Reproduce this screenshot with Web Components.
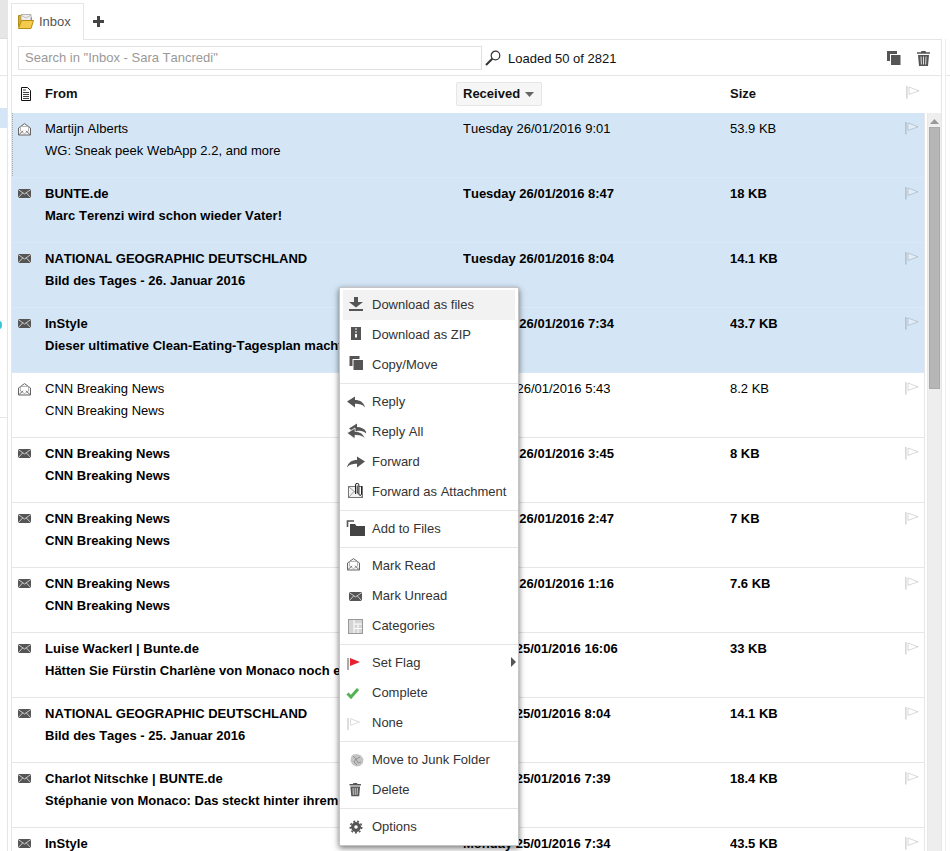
<!DOCTYPE html>
<html lang="en">
<head>
<meta charset="utf-8">
<title>Inbox</title>
<style>
html,body{margin:0;padding:0;height:851px;overflow:hidden;background:#fff;font:13px "Liberation Sans",Arial,sans-serif;font-kerning:none;color:#000}
</style>
</head>
<body>
<mail-app>
  <folder-strip slot="left"></folder-strip>
  <mail-tabs slot="tabs"><span>Inbox</span></mail-tabs>
  <mail-toolbar slot="toolbar">
    <span slot="placeholder">Search in "Inbox - Sara Tancredi"</span>
    <span slot="status">Loaded 50 of 2821</span>
  </mail-toolbar>
  <list-header slot="header"></list-header>
  <mail-list slot="list">
    <mail-row selected focused read><span slot="from">Martijn Alberts</span><span slot="subject">WG: Sneak peek WebApp 2.2, and more</span><span slot="date">Tuesday 26/01/2016 9:01</span><span slot="size">53.9 KB</span></mail-row>
    <mail-row selected><span slot="from">BUNTE.de</span><span slot="subject">Marc Terenzi wird schon wieder Vater!</span><span slot="date">Tuesday 26/01/2016 8:47</span><span slot="size">18 KB</span></mail-row>
    <mail-row selected><span slot="from">NATIONAL GEOGRAPHIC DEUTSCHLAND</span><span slot="subject">Bild des Tages - 26. Januar 2016</span><span slot="date">Tuesday 26/01/2016 8:04</span><span slot="size">14.1 KB</span></mail-row>
    <mail-row selected><span slot="from">InStyle</span><span slot="subject">Dieser ultimative Clean-Eating-Tagesplan macht</span><span slot="date">Tuesday 26/01/2016 7:34</span><span slot="size">43.7 KB</span></mail-row>
    <mail-row read><span slot="from">CNN Breaking News</span><span slot="subject">CNN Breaking News</span><span slot="date">Tuesday 26/01/2016 5:43</span><span slot="size">8.2 KB</span></mail-row>
    <mail-row><span slot="from">CNN Breaking News</span><span slot="subject">CNN Breaking News</span><span slot="date">Tuesday 26/01/2016 3:45</span><span slot="size">8 KB</span></mail-row>
    <mail-row><span slot="from">CNN Breaking News</span><span slot="subject">CNN Breaking News</span><span slot="date">Tuesday 26/01/2016 2:47</span><span slot="size">7 KB</span></mail-row>
    <mail-row><span slot="from">CNN Breaking News</span><span slot="subject">CNN Breaking News</span><span slot="date">Tuesday 26/01/2016 1:16</span><span slot="size">7.6 KB</span></mail-row>
    <mail-row><span slot="from">Luise Wackerl | Bunte.de</span><span slot="subject">Hätten Sie Fürstin Charlène von Monaco noch e</span><span slot="date">Monday 25/01/2016 16:06</span><span slot="size">33 KB</span></mail-row>
    <mail-row><span slot="from">NATIONAL GEOGRAPHIC DEUTSCHLAND</span><span slot="subject">Bild des Tages - 25. Januar 2016</span><span slot="date">Monday 25/01/2016 8:04</span><span slot="size">14.1 KB</span></mail-row>
    <mail-row><span slot="from">Charlot Nitschke | BUNTE.de</span><span slot="subject">Stéphanie von Monaco: Das steckt hinter ihrem</span><span slot="date">Monday 25/01/2016 7:39</span><span slot="size">18.4 KB</span></mail-row>
    <mail-row><span slot="from">InStyle</span><span slot="date">Monday 25/01/2016 7:34</span><span slot="size">43.5 KB</span></mail-row>
  </mail-list>
</mail-app>
<context-menu>
  <menu-item icon="download" hover>Download as files</menu-item>
  <menu-item icon="zip">Download as ZIP</menu-item>
  <menu-item icon="copy">Copy/Move</menu-item>
  <menu-sep></menu-sep>
  <menu-item icon="reply">Reply</menu-item>
  <menu-item icon="replyall">Reply All</menu-item>
  <menu-item icon="forward">Forward</menu-item>
  <menu-item icon="attach">Forward as Attachment</menu-item>
  <menu-sep></menu-sep>
  <menu-item icon="files">Add to Files</menu-item>
  <menu-sep></menu-sep>
  <menu-item icon="markread">Mark Read</menu-item>
  <menu-item icon="markunread">Mark Unread</menu-item>
  <menu-item icon="categories">Categories</menu-item>
  <menu-sep></menu-sep>
  <menu-item icon="setflag" submenu>Set Flag</menu-item>
  <menu-item icon="check">Complete</menu-item>
  <menu-item icon="noflag">None</menu-item>
  <menu-sep></menu-sep>
  <menu-item icon="junk">Move to Junk Folder</menu-item>
  <menu-item icon="trash">Delete</menu-item>
  <menu-sep></menu-sep>
  <menu-item icon="gear">Options</menu-item>
</context-menu>
<script>
const ENV_OPEN='<path d="M.5 5 6.500.6l6 4.400v7H.5z" fill="#f4f4f4" stroke="#666"/><path d="M2.500 3.500h8v4.500l-4 2.500-4-2.500z" fill="#fff" stroke="#999" stroke-width=".7"/><path d="M.8 11.700 5.200 7.800M12.200 11.700 7.800 7.800" stroke="#777" fill="none"/>';
const ENV_CLOSED='<rect x="0" y="1" width="13" height="9" fill="#555"/><path d="M0 1.400 6.500 6 13 1.400M0 10 4.700 4.900M13 10 8.300 4.900" stroke="#e8e8e8" stroke-width=".8" fill="none"/>';
const ARROW_L='M1 8.500 9 3.500v3.400c5 0 9 2.400 10 7.600-2.400-3-5.400-3.700-10-3.700v3.600z';
const ARROW_R='M19 8.500 11 3.500v3.400c-5 0-9 2.400-10 7.600 2.400-3 5.400-3.700 10-3.700v3.600z';
const TRASH='<path d="M4.500 0h4l.6 1.200H13v1.600H0V1.200h3.900z" fill="#555"/><path d="M1 4h11l-1 11H2z" fill="#555"/><path d="M4 5.500 4.400 13.500M6.500 5.500v8M9 5.500 8.600 13.500" stroke="#eee" stroke-width=".9"/>';
const COPY='<rect x="0" y="0" width="10" height="10" fill="#555"/><rect x="3.500" y="3.500" width="10.500" height="11" fill="#555" stroke="#fff"/>';
const FLAG_PALE='<rect x="0" y="0" width="1.700" height="12.500" fill="#000" fill-opacity=".15"/><path d="M3 1 13 4.800 3 8.400z" fill="#fff" fill-opacity=".3" stroke="#000" stroke-opacity=".15"/>';
const ICONS={
 download:[20,18,'<path d="M8 1h4v5h5l-7 5.500L3 6h5z" fill="#555"/><rect x="3" y="13" width="14" height="2" fill="#555"/>'],
 zip:[20,18,'<rect x="5" y="1" width="10" height="13" fill="#555"/><path d="M10 2v2M10 5v2" stroke="#fff"/><rect x="9" y="8" width="2" height="3.500" fill="#fff"/>'],
 copy:[20,18,'<g transform="translate(3.500 0)">'+COPY+'</g>'],
 reply:[20,18,'<path d="'+ARROW_L+'" fill="#555"/>'],
 replyall:[20,18,'<path d="'+ARROW_L+'" transform="translate(2 -3)" fill="#555"/><path d="'+ARROW_L+'" transform="translate(0 1.500)" fill="#555" stroke="#fff" stroke-width=".8"/>'],
 forward:[20,18,'<path d="'+ARROW_R+'" fill="#555"/>'],
 attach:[20,18,'<rect x="2.500" y="3.500" width="14" height="11" fill="#f2f2f2" stroke="#777"/><path d="M3 4 9.500 9.500 16 4M3 14 8 8.500M16 14 11 8.500" stroke="#888" fill="none" stroke-width=".8"/><path d="M9.500 11V2a1.700 1.700 0 0 1 3.400 0V11a1.300 1.300 0 0 0 2.600 0V3M11.200 2.500v8" fill="#fff" stroke="#222" stroke-width="1"/>'],
 files:[20,18,'<path d="M1.500 7V1h6.500" fill="none" stroke="#555" stroke-width="1.600"/><path d="M4 4V16h15V6H10.500L9 4z" fill="#444"/>'],
 markread:[20,18,'<g transform="translate(1 1)">'+ENV_OPEN+'</g>'],
 markunread:[20,18,'<g transform="translate(3 4)">'+ENV_CLOSED+'</g>'],
 categories:[20,18,'<rect x="2.500" y="2.500" width="14" height="14" fill="#d4d4d4" stroke="#999"/><path d="M8 3v13M8 7h8M12 7v9M8 11.500h8" stroke="#fff" fill="none"/>'],
 setflag:[20,18,'<rect x="1" y="4" width="2" height="12" fill="#aaa"/><path d="M4 4 14 8 4 12z" fill="#e8212e"/>'],
 check:[20,18,'<path d="M1.500 9.500 5 13l7-8" fill="none" stroke="#55b155" stroke-width="3"/>'],
 noflag:[20,18,'<rect x="1" y="4" width="2" height="12" fill="#ddd"/><path d="M4.500 4.700 13.500 8 4.500 11.300z" fill="#fff" stroke="#ddd"/>'],
 junk:[20,18,'<path d="M7 3.500 11 3l4 1.500L17.500 8l-.5 4-3 3-4 .5-3.500-2L4.500 10l.5-4z" fill="#c4c4c4"/><path d="M7 5l3 3-2 3M10 8l4-2M10 8l2 4 3-1M8 11l3 3" fill="none" stroke="#888" stroke-width=".8"/>'],
 trash:[20,18,'<g transform="translate(3.500 2) scale(.88)">'+TRASH+'</g>'],
 gear:[20,18,'<circle cx="10" cy="9" r="4.500" fill="#555" stroke="#555"/><circle cx="10" cy="9" r="5.700" fill="none" stroke="#555" stroke-width="1.600" stroke-dasharray="2 1.900"/><circle cx="10" cy="9" r="1.800" fill="#fff"/>'],
 openmail:[13,13,ENV_OPEN],
 closedmail:[13,13,ENV_CLOSED],
 flag:[14,13,FLAG_PALE],
 doc:[12,14,'<path d="M1.500.5h6l3 3v10h-9z" fill="#fff" stroke="#111"/><path d="M3 3h3M3 5.500h6M3 7.500h6M3 9.500h6M3 11.500h6" stroke="#111" stroke-width=".8"/>'],
 tabfolder:[16,15,'<path d="M.5 1.500h5v2h8v9h-13z" fill="#d8ae2d" stroke="#b38d18"/><path d="M3 .5h10l0 6H3z" fill="#eee" stroke="#999" stroke-width=".7"/><path d="M3 1 8 4l5-3" stroke="#aaa" fill="none" stroke-width=".7"/><path d="M3.500 6.500H15.500L13 14.500H.5z" fill="#f3ca4c" stroke="#b38d18"/>'],
 plus:[11,11,'<path d="M4 0h3v4h4v3H7v4H4V7H0V4h4z" fill="#444"/>'],
 search:[16,16,'<circle cx="10.500" cy="5.500" r="4.300" fill="none" stroke="#333" stroke-width="1.200"/><path d="M7.300 8.700 1 15" stroke="#333" stroke-width="2"/>'],
 bigcopy:[14,15,COPY],
 bigtrash:[13,15,TRASH],
 triangleDown:[9,5,'<path d="M0 0h9L4.500 5z" fill="#666"/>'],
 triangleUp:[9,5,'<path d="M0 5h9L4.500 0z" fill="#999"/>'],
 triangleRight:[5,10,'<path d="M0 0l5 5-5 5z" fill="#555"/>']
};
customElements.define('ui-icon',class extends HTMLElement{
  static get observedAttributes(){return ['name'];}
  constructor(){super();this.attachShadow({mode:'open'});}
  attributeChangedCallback(){this.render();}
  connectedCallback(){this.render();}
  render(){
    const def=ICONS[this.getAttribute('name')];
    if(!def)return;
    const [w,h,s]=def;
    this.shadowRoot.innerHTML='<style>:host{display:block;width:'+w+'px;height:'+h+'px;flex:none}svg{display:block}</style><svg xmlns="http://www.w3.org/2000/svg" width="'+w+'" height="'+h+'" viewBox="0 0 '+w+' '+h+'">'+s+'</svg>';
  }
});
function define(name,css,html,init){
  customElements.define(name,class extends HTMLElement{
    constructor(){super();this.attachShadow({mode:'open'});this.shadowRoot.innerHTML='<style>'+css+'</style>'+html;}
    connectedCallback(){if(init)init.call(this,this.shadowRoot);}
  });
}
define('mail-app',`
  :host{display:grid;grid-template-columns:8px 934px 8px;height:851px;overflow:hidden}
  .main{margin-left:3px;display:flex;flex-direction:column;height:851px;min-width:0}
  .panel{flex:1;display:flex;flex-direction:column;min-height:0;border:1px solid #e6e6e6;border-width:1px 1px 0 1px}
  .right{margin-left:3px;border-left:1px solid #eee;margin-top:39px;display:flex;flex-direction:column}
  .right i{display:block;height:36px;border-bottom:1px solid #e6e6e6}
`,`<slot name="left"></slot><div class="main"><slot name="tabs"></slot><div class="panel"><slot name="toolbar"></slot><slot name="header"></slot><slot name="list"></slot></div></div><div class="right"><i></i></div>`);
define('folder-strip',`
  :host{display:flex;flex-direction:column;border-right:1px solid #e6e6e6;height:851px;position:relative;overflow:hidden}
  .a{height:38px;background:#e6e6e6;border-bottom:1px solid #ddd}
  .b{height:36px;border-bottom:1px solid #e6e6e6}
  .c{height:32px}
  .d{height:20px;background:#d4e6f6}
  .e{height:289px;border-bottom:1px solid #e6e6e6;position:relative}
  .e b{position:absolute;left:-3px;top:193px;width:5px;height:8px;border-radius:50%;background:#3fc6d6}
`,`<div class="a"></div><div class="b"></div><div class="c"></div><div class="d"></div><div class="e"><b></b></div>`);
define('mail-tabs',`
  :host{display:flex;align-items:flex-end;height:39px;font-size:13px;color:#555}
  .tab{display:flex;align-items:center;height:37px;width:73px;box-sizing:border-box;border:1px solid #e6e6e6;border-bottom:0;padding:0 0 2px 6px;gap:5px;background:#fff;margin-bottom:-1px;position:relative;z-index:1}
  .plus{margin:0 0 12px 9px}
`,`<div class="tab"><ui-icon name="tabfolder"></ui-icon><slot></slot></div><div class="plus"><ui-icon name="plus"></ui-icon></div>`);
define('mail-toolbar',`
  :host{display:flex;align-items:center;height:36px;box-sizing:border-box;border-bottom:1px solid #e6e6e6;padding:1px 0 0 6px}
  .box{width:464px;height:24px;box-sizing:border-box;border:1px solid #e0e0e0;color:#999;padding-left:6px;line-height:22px;flex:none}
  ui-icon[name=search]{margin-left:3px}
  .st{margin-left:7px;flex:1;color:#111}
  .act{display:flex;gap:16px;margin-right:11px;align-items:center}
`,`<div class="box"><slot name="placeholder"></slot></div><ui-icon name="search"></ui-icon><div class="st"><slot name="status"></slot></div><div class="act"><ui-icon name="bigcopy"></ui-icon><ui-icon name="bigtrash"></ui-icon></div>`);
define('list-header',`
  :host{display:grid;grid-template-columns:33px 411px 274px 176px 18px;height:37px;padding-bottom:1px;align-items:center;font-weight:bold;box-sizing:border-box;color:#111}
  span{margin-bottom:2px}
  ui-icon[name=doc]{margin-left:8px}
  .recv{display:flex;align-items:center;gap:5px;width:86px;height:24px;line-height:21px;box-sizing:border-box;border:1px solid #e6e6e6;border-radius:2px;background:#f6f6f6;padding-left:6px}
  .recv b{display:block;font-weight:bold;height:22px}
  ui-icon[name=triangleDown]{margin-top:1px}
  ui-icon[name=flag]{margin-top:-3px}
`,`<ui-icon name="doc"></ui-icon><span>From</span><div class="recv"><b>Received</b><ui-icon name="triangleDown"></ui-icon></div><span>Size</span><ui-icon name="flag"></ui-icon>`);
define('mail-list',`
  :host{display:flex;flex:1;min-height:0;overflow:hidden}
  .rows{width:912px;flex:none;border-right:1px solid #e6e6e6;height:100%;overflow:hidden}
  .sb{width:16px;margin-left:2px;background:#eee;display:flex;flex-direction:column;align-items:center;height:100%;box-sizing:border-box;border-left:1px solid #e8e8e8}
  ui-icon{margin-top:6px}
  .th{margin-top:3px;width:11px;height:262px;box-sizing:border-box;background:#b6b6b6;border:1px solid #aaa}
`,`<div class="rows"><slot></slot></div><div class="sb"><ui-icon name="triangleUp"></ui-icon><div class="th"></div></div>`);
define('mail-row',`
  :host{display:grid;grid-template-columns:33px 418px 267px 175px 19px;grid-template-rows:22px 22px;height:65px;box-sizing:border-box;padding-top:5px;border-bottom:1px solid #e6e6e6;line-height:22px;font-weight:bold;color:#000}
  :host([read]){font-weight:normal}
  :host([selected]){background:#d4e6f6;border-bottom-color:#d9e9f7}
  :host([focused]){background:repeating-linear-gradient(#aaa 0 1px,transparent 1px 2px) left top/1px 100% no-repeat,#d4e6f6}
  .ic{grid-row:1/3;padding:5px 0 0 6px}
  .from,.date,.size{white-space:nowrap;overflow:hidden}
  .subj{grid-column:2/5;white-space:nowrap;overflow:hidden;grid-row:2}
  .fl{padding-top:4px}
`,`<div class="ic"><ui-icon></ui-icon></div><div class="from"><slot name="from"></slot></div><div class="date"><slot name="date"></slot></div><div class="size"><slot name="size"></slot></div><div class="fl"><ui-icon name="flag"></ui-icon></div><div class="subj"><slot name="subject"></slot></div>`,
 function(r){r.querySelector('.ic ui-icon').setAttribute('name',this.hasAttribute('read')?'openmail':'closedmail');});
define('context-menu',`
  :host{position:absolute;left:339px;top:287px;width:180px;box-sizing:border-box;background:#fff;border:1px solid #c4c4c4;padding:2px 3px 3px;box-shadow:0 2px 6px rgba(0,0,0,.55);display:block;z-index:10}
`,`<slot></slot>`);
define('menu-item',`
  :host{display:flex;height:30px;line-height:30px;color:#333;position:relative;padding-left:3px;gap:6px}
  .t{display:block;height:30px}
  .i{margin-top:6px}
  .arrow{position:absolute;right:-1px;top:9px}
  :host([hover]){background:#f2f2f2}
`,`<ui-icon class="i"></ui-icon><div class="t"><slot></slot></div><ui-icon class="arrow"></ui-icon>`,
 function(r){r.querySelector('.i').setAttribute('name',this.getAttribute('icon'));
   if(this.hasAttribute('submenu'))r.querySelector('.arrow').setAttribute('name','triangleRight');});
define('menu-sep',`
  :host{display:block;height:1px;background:#e6e6e6;margin:3px -3px}
`,``);
</script>
</body>
</html>
